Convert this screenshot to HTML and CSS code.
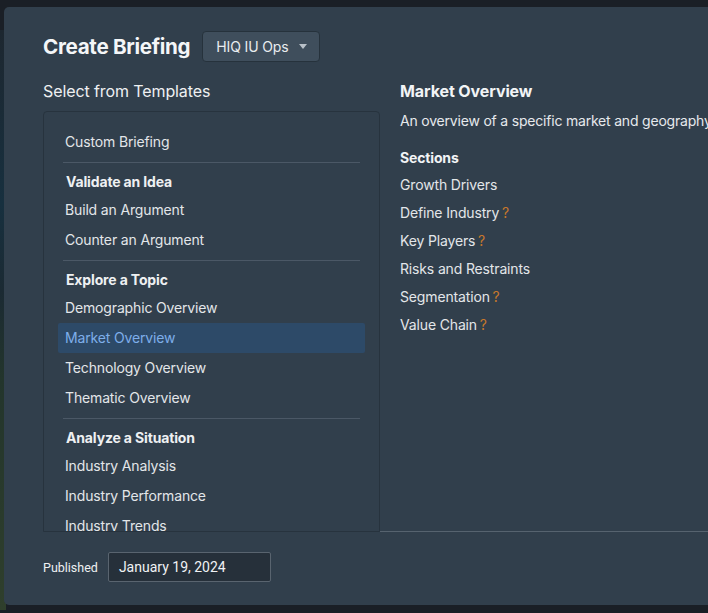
FILE: index.html
```html
<!DOCTYPE html>
<html lang="en">
<head>
    <meta charset="UTF-8">
    <meta name="viewport" content="width=device-width, initial-scale=1.0">
    <title>Create Briefing</title>
    <link rel="stylesheet" href="styles.css">
</head>
<body>

<div class="backdrop"></div>

<div class="dialog">
    <!-- Header -->
    <div class="header">
        <h1>Create Briefing</h1>
        <button class="org-select">HIQ IU Ops <span class="caret"></span></button>
    </div>

    <div class="content">
        <!-- Template list -->
        <div class="left">
            <div class="label">Select from Templates</div>
            <div class="list">
                <div class="item">Custom Briefing</div>
                <div class="divider"></div>
                <div class="group">Validate an Idea</div>
                <div class="item">Build an Argument</div>
                <div class="item">Counter an Argument</div>
                <div class="divider"></div>
                <div class="group">Explore a Topic</div>
                <div class="item">Demographic Overview</div>
                <div class="item selected">Market Overview</div>
                <div class="item">Technology Overview</div>
                <div class="item">Thematic Overview</div>
                <div class="divider"></div>
                <div class="group">Analyze a Situation</div>
                <div class="item">Industry Analysis</div>
                <div class="item">Industry Performance</div>
                <div class="item">Industry Trends</div>
            </div>
        </div>

        <!-- Template details -->
        <div class="right">
            <h2>Market Overview</h2>
            <p class="desc">An overview of a specific market and geography</p>
            <div class="sections-title">Sections</div>
            <div class="section">Growth Drivers</div>
            <div class="section">Define Industry <span class="help">?</span></div>
            <div class="section">Key Players <span class="help">?</span></div>
            <div class="section">Risks and Restraints</div>
            <div class="section">Segmentation <span class="help">?</span></div>
            <div class="section">Value Chain <span class="help">?</span></div>
        </div>
    </div>

    <!-- Footer -->
    <div class="footer">
        <span class="published">Published</span>
        <div class="date-input">January 19, 2024</div>
    </div>
</div>

</body>
</html>
```

FILE: styles.css
```css
    html, body {
        margin: 0;
        height: 100%;
        overflow: hidden;
    }
    body {
        background-color: #1a1f26;
        font-family: Inter, "Liberation Sans", Arial, sans-serif;
        color: #e6e9ec;
        position: relative;
    }
    .backdrop {
        position: absolute;
        left: 0;
        top: 30px;
        width: 6px;
        height: 580px;
        background: linear-gradient(#1d2730 0%, #17303f 30%, #1b2a33 45%, #23352c 60%, #2f3f2c 100%);
    }
    .dialog {
        position: absolute;
        left: 4px;
        top: 7px;
        width: 760px;
        height: 598px;
        background-color: #313f4c;
        border-radius: 5px;
        box-sizing: border-box;
        padding: 24px 0 0 39px;
    }
    .header {
        display: flex;
        align-items: center;
        gap: 12px;
        height: 30px;
    }
    h1 {
        margin: 0;
        font-size: 20.6px;
        font-weight: 700;
        color: #f4f6f8;
        letter-spacing: -0.3px;
    }
    .org-select {
        height: 31px;
        padding: 0 12px 0 13px;
        background-color: #3f4e5c;
        border: 1px solid #26323c;
        border-radius: 4px;
        color: #e9ecef;
        font-family: Inter, "Liberation Sans", Arial, sans-serif;
        font-size: 14px;
        letter-spacing: -0.15px;
        display: flex;
        align-items: center;
        gap: 11px;
    }
    .caret {
        width: 0;
        height: 0;
        border-left: 4px solid transparent;
        border-right: 4px solid transparent;
        border-top: 5px solid #b9c1c9;
        margin-top: 1px;
    }
    .content {
        display: flex;
        margin-top: 20px;
        height: 451px;
    }
    .left {
        width: 337px;
        flex-shrink: 0;
        display: flex;
        flex-direction: column;
        min-height: 0;
    }
    .label {
        font-size: 16px;
        line-height: 20px;
        color: #eef0f2;
        margin-bottom: 10px;
        letter-spacing: -0.1px;
    }
    .list {
        flex: 1;
        min-height: 0;
        overflow: hidden;
        border: 1px solid #27333e;
        border-radius: 4px 4px 0 0;
        padding-top: 15px;
    }
    .item {
        height: 30px;
        line-height: 30px;
        margin: 0 14px;
        padding-left: 7px;
        font-size: 14px;
        letter-spacing: -0.15px;
        color: #e3e6e9;
        border-radius: 2px;
    }
    .item.selected {
        background-color: #2d4a68;
        color: #7eaeea;
    }
    .group {
        height: 28px;
        line-height: 30px;
        margin: 0 14px;
        padding-left: 8px;
        font-size: 14px;
        letter-spacing: -0.15px;
        font-weight: 700;
        color: #eef0f2;
    }
    .divider {
        height: 1px;
        background-color: #4b5866;
        margin: 5px 19px 4px 19px;
    }
    .right {
        flex: 1;
        padding-left: 20px;
        border-bottom: 1px solid #56636f;
        white-space: nowrap;
        overflow: hidden;
    }
    h2 {
        margin: 0;
        font-size: 16px;
        line-height: 20px;
        font-weight: 700;
        letter-spacing: -0.1px;
        color: #f2f4f6;
    }
    .desc {
        margin: 10px 0 0 0;
        font-size: 14px;
        line-height: 20px;
        letter-spacing: -0.2px;
        color: #e6e9ec;
    }
    .sections-title {
        margin-top: 17px;
        margin-bottom: -1px;
        font-size: 14px;
        line-height: 20px;
        letter-spacing: -0.15px;
        font-weight: 700;
        color: #f2f4f6;
    }
    .section {
        margin-top: 8px;
        font-size: 14px;
        line-height: 20px;
        letter-spacing: -0.15px;
        color: #e3e6e9;
    }
    .help {
        color: #c7782b;
        margin-left: -1px;
    }
    .footer {
        display: flex;
        align-items: center;
        gap: 10px;
        padding-top: 20px;
    }
    .published {
        font-family: Roboto, "Liberation Sans", Arial, sans-serif;
        font-size: 12.5px;
        color: #eef0f2;
    }
    .date-input {
        width: 163px;
        height: 30px;
        box-sizing: border-box;
        padding-left: 10px;
        line-height: 28px;
        background-color: #26303a;
        border: 1px solid #59646f;
        border-radius: 2px;
        font-family: Roboto, "Liberation Sans", Arial, sans-serif;
        font-size: 14px;
        color: #f0f2f4;
    }
```
